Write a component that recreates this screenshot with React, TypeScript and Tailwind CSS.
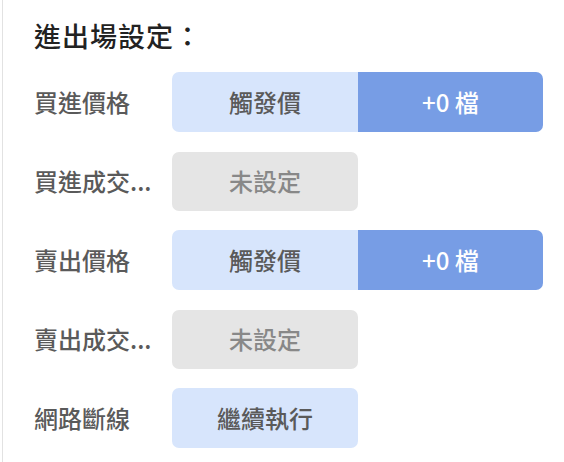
import React from "react";

const font = { fontFamily: '"Noto Sans CJK TC", "Noto Sans", sans-serif' };

function Label({ text }: { text: string }) {
  return (
    <div className="w-[128px] mr-[10px] shrink-0 whitespace-nowrap text-[24px] font-medium text-[#5a5a5a] leading-[60px]">
      {text}
    </div>
  );
}

export default function App() {
  const rows: { label: string; kind: "split" | "unset" | "single"; a?: string; b?: string }[] = [
    { label: "買進價格", kind: "split", a: "觸發價", b: "+0 檔" },
    { label: "買進成交...", kind: "unset", a: "未設定" },
    { label: "賣出價格", kind: "split", a: "觸發價", b: "+0 檔" },
    { label: "賣出成交...", kind: "unset", a: "未設定" },
    { label: "網路斷線", kind: "single", a: "繼續執行" },
  ];
  return (
    <div className="w-[564px] h-[462px] bg-white pl-[2px]">
      <div style={font} className="h-full border-l border-[#e2e2e2] pl-[31px] pt-[18px]">
        <div className="text-[27px] font-medium text-[#222222] leading-[36px] tracking-[1px]">進出場設定：</div>
        <div className="mt-[18px] flex flex-col gap-[19px]">
          {rows.map((r, i) => (
            <div key={i} className="flex items-center h-[60px]">
              <Label text={r.label} />
              {r.kind === "split" && (
                <div className="flex h-[60px] rounded-[7px] overflow-hidden">
                  <div className="w-[186px] bg-[#d7e5fc] flex items-center justify-center text-[24px] font-medium text-[#5a5a5a]">
                    {r.a}
                  </div>
                  <div className="w-[185px] bg-[#779de5] flex items-center justify-center text-[24px] font-medium text-white">
                    {r.b}
                  </div>
                </div>
              )}
              {r.kind === "unset" && (
                <div className="w-[186px] h-[59px] rounded-[7px] bg-[#e5e5e5] flex items-center justify-center text-[24px] font-medium text-[#888888]">
                  {r.a}
                </div>
              )}
              {r.kind === "single" && (
                <div className="w-[186px] h-[60px] rounded-[7px] bg-[#d7e5fc] flex items-center justify-center text-[24px] font-medium text-[#5a5a5a]">
                  {r.a}
                </div>
              )}
            </div>
          ))}
        </div>
      </div>
    </div>
  );
}
